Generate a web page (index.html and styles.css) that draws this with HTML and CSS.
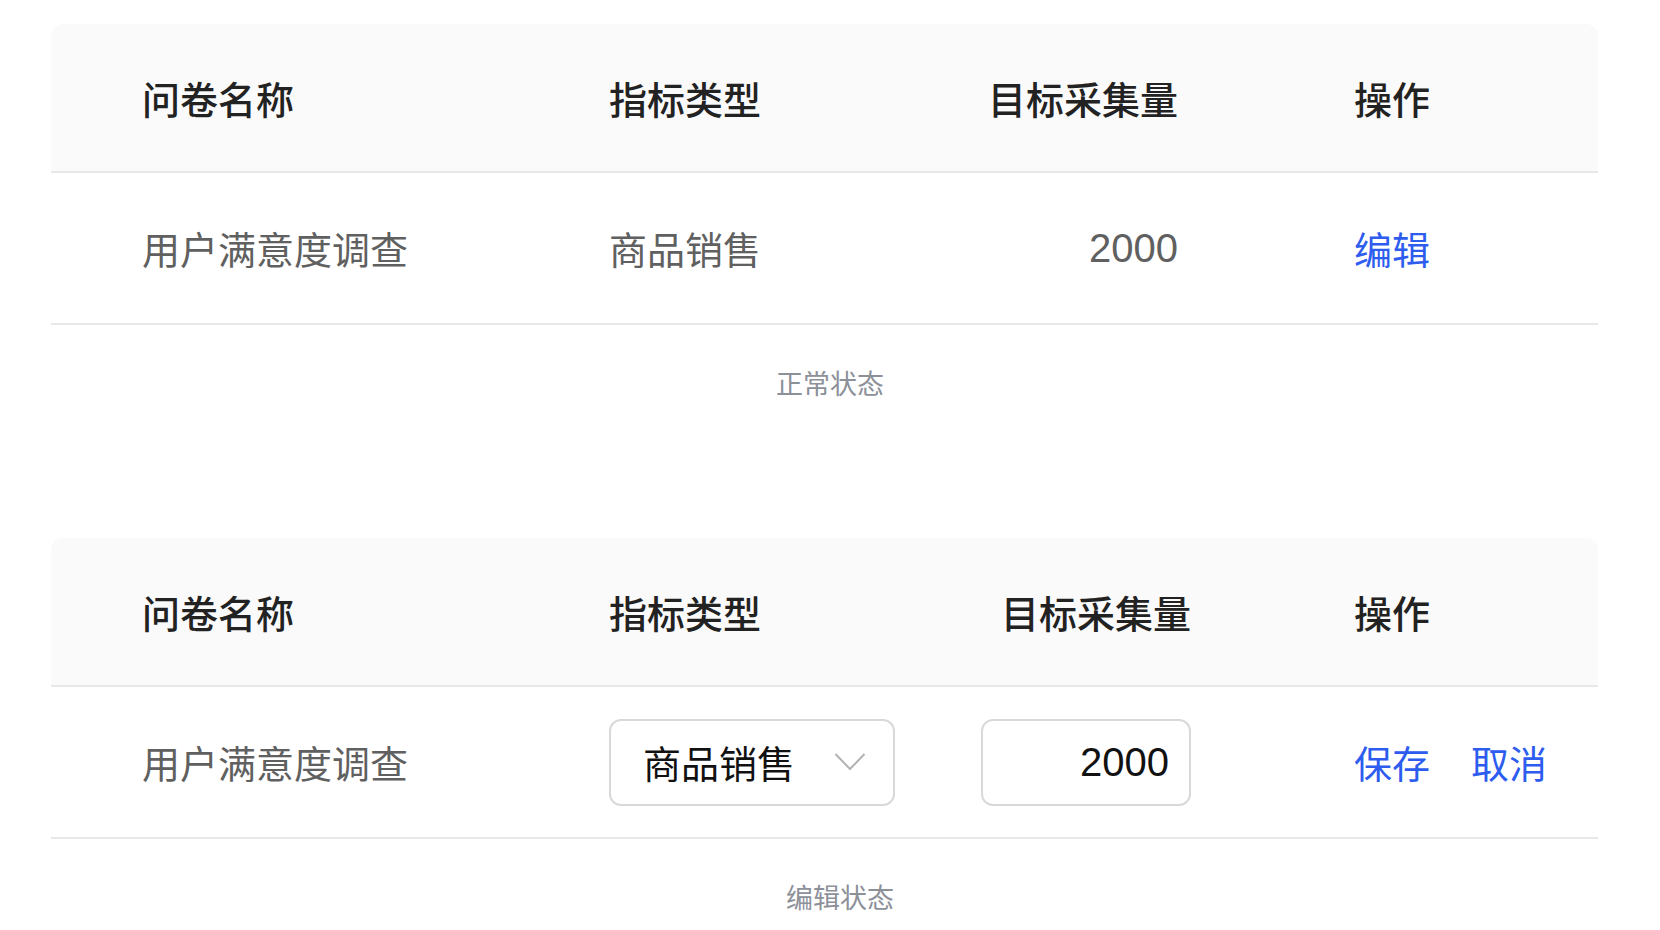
FILE: index.html
```html
<!DOCTYPE html>
<html lang="zh-CN">
<head>
<meta charset="utf-8">
<title>表格编辑状态</title>
<link rel="stylesheet" href="styles.css">
</head>
<body>
<main class="page">
  <section class="demo">
    <div class="table">
      <div class="row head">
        <div class="cell c1">问卷名称</div>
        <div class="cell c2">指标类型</div>
        <div class="cell c3">目标采集量</div>
        <div class="cell c4">操作</div>
      </div>
      <div class="row body">
        <div class="cell c1">用户满意度调查</div>
        <div class="cell c2">商品销售</div>
        <div class="cell c3 num">2000</div>
        <div class="cell c4"><a class="link">编辑</a></div>
      </div>
    </div>
    <p class="caption">正常状态</p>
  </section>

  <section class="demo demo-edit">
    <div class="table table-edit">
      <div class="row head">
        <div class="cell c1">问卷名称</div>
        <div class="cell c2">指标类型</div>
        <div class="cell c3">目标采集量</div>
        <div class="cell c4">操作</div>
      </div>
      <div class="row body">
        <div class="cell c1">用户满意度调查</div>
        <div class="cell c2">
          <div class="select">
            <span class="select-text">商品销售</span>
            <svg class="chevron" width="32" height="20" viewBox="0 0 32 20"><path d="M1.5 2 L16 17 L30.5 2" fill="none" stroke="#b3b3b3" stroke-width="2"/></svg>
          </div>
        </div>
        <div class="cell c3"><input class="num-input" type="text" value="2000"></div>
        <div class="cell c4 actions"><a class="link">保存</a><a class="link">取消</a></div>
      </div>
    </div>
    <p class="caption caption-edit">编辑状态</p>
  </section>
</main>
</body>
</html>
```

FILE: styles.css
```css
html, body {
  margin: 0;
  padding: 0;
  background: #ffffff;
}

body {
  font-family: "Noto Sans CJK SC", "Noto Sans", sans-serif;
  color: #222222;
}

.page {
  width: 1660px;
  padding-top: 24px;
}

.demo-edit {
  margin-top: 137px;
}

.table {
  margin-left: 51px;
  width: 1547px;
}

.row {
  display: grid;
  grid-template-columns: 467px 360px 385px 1fr;
  align-items: center;
  padding-left: 91px;
  border-bottom: 2px solid #e8e8e8;
}

.head {
  height: 147px;
  background: #fafafa;
  border-radius: 12px 12px 0 0;
  font-size: 38px;
  font-weight: 500;
  color: #222222;
}

.body {
  height: 150px;
  font-size: 38px;
  color: #606060;
}

.cell {
  line-height: 1.2;
  white-space: nowrap;
}

.c3 {
  text-align: right;
  padding-right: 176px;
}

.table-edit .c3 {
  padding-right: 163px;
}

.num {
  font-family: "Liberation Sans", "Noto Sans CJK SC", sans-serif;
  font-size: 40px;
}

.link {
  color: #2d5cef;
  cursor: pointer;
}

.actions {
  display: flex;
  gap: 41px;
}

.select {
  box-sizing: border-box;
  width: 286px;
  height: 87px;
  border: 2px solid #d9d9d9;
  border-radius: 12px;
  display: flex;
  align-items: center;
  justify-content: space-between;
  padding: 0 27px 0 32px;
  background: #ffffff;
}

.select-text {
  font-size: 38px;
  color: #111111;
}

.chevron {
  display: block;
}

.num-input {
  box-sizing: border-box;
  width: 210px;
  height: 87px;
  border: 2px solid #d9d9d9;
  border-radius: 12px;
  padding: 0 20px 0 10px;
  text-align: right;
  font-family: "Liberation Sans", sans-serif;
  font-size: 40px;
  color: #111111;
  background: #ffffff;
  outline: none;
}

.caption {
  margin: 40px 0 0;
  text-align: center;
  font-size: 27px;
  line-height: 36px;
  color: #8c9099;
}

.caption-edit {
  padding-left: 20px;
}
```
